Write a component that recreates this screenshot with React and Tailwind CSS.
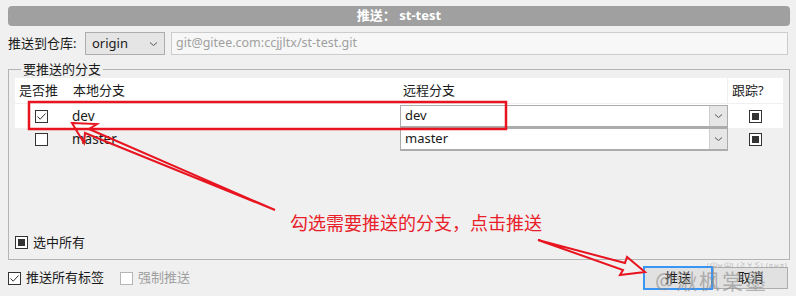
import React from "react";

const FONT = { fontFamily: '"Noto Sans","Noto Sans CJK SC",sans-serif' };

function Check({ state = "off", disabled = false }) {
  const border = disabled ? "border-[#b5b5b5]" : "border-[#333333]";
  return (
    <div className={`w-[13px] h-[13px] border ${border} bg-white flex items-center justify-center shrink-0`}>
      {state === "on" && (
        <svg width="11" height="11" viewBox="0 0 11 11">
          <polyline points="1.5,5.5 4.2,8.2 9.5,2.5" fill="none" stroke="#333" strokeWidth="1" />
        </svg>
      )}
      {state === "mixed" && <div className="w-[7px] h-[7px] bg-[#333333]" />}
    </div>
  );
}

function Chevron() {
  return (
    <svg width="9" height="6" viewBox="0 0 9 6">
      <polyline points="1,1.5 4.5,4.5 8,1.5" fill="none" stroke="#555" strokeWidth="1" />
    </svg>
  );
}

function Combo({ value }) {
  return (
    <div className="flex h-[23px] w-[328px] border border-[#acacac] border-b-2 bg-white">
      <div className="flex-1 flex items-center pl-[4px] text-[13px] text-[#1a1a1a]">{value}</div>
      <div className="w-[18px] border-l border-[#cfcfcf] bg-[#e6e6e6] flex items-center justify-center">
        <Chevron />
      </div>
    </div>
  );
}

export default function App() {
  return (
    <div style={FONT} className="relative w-[796px] h-[296px] bg-[#f0f0f0] px-[8px] pt-[6px] text-[13px] text-[#1a1a1a] overflow-hidden">
      {/* title */}
      <div className="h-[20px] w-[782px] rounded-[4px] bg-[#a0a0a0] flex items-center justify-center text-white font-bold text-[13px]">
        推送： st-test
      </div>

      {/* repo row */}
      <div className="mt-[6px] h-[23px] flex items-center">
        <div className="w-[77px]">推送到仓库:</div>
        <div className="w-[80px] h-[23px] border border-[#adadad] bg-[#e5e5e5] flex items-center justify-between pl-[6px] pr-[6px]">
          <span>origin</span>
          <Chevron />
        </div>
        <div className="ml-[6px] flex-1 h-[23px] border border-[#cccccc] bg-[#f7f7f7] flex items-center pl-[4px] text-[#a0a0a0] text-[12.5px]">
          git@gitee.com:ccjjltx/st-test.git
        </div>
      </div>

      {/* group */}
      <fieldset className="mt-[6px] w-[782px] border border-[#b4b4b4] px-[6px] pb-[7px] m-0">
        <legend className="ml-[6px] px-[2px] text-[13px] leading-[17px]">要推送的分支</legend>
        <div className="h-[174px] flex flex-col">
          {/* header */}
          <div className="flex h-[25px] bg-white items-center">
            <div className="w-[50px] pl-[4px]">是否推</div>
            <div className="w-[333px] pl-[8px]">本地分支</div>
            <div className="w-[329px] pl-[5px]">远程分支</div>
            <div className="flex-1 h-full border-l border-[#f0f0f0] flex items-center pl-[4px]">跟踪?</div>
          </div>
          <div className="h-[1px] bg-[#f0f0f0]" />
          {/* row 1 */}
          <div className="flex h-[24px] bg-white items-center">
            <div className="w-[50px] flex justify-center pl-[3px]"><Check state="on" /></div>
            <div className="w-[335px] pl-[7px] text-[13.5px]">dev</div>
            <Combo value="dev" />
            <div className="flex-1 flex justify-center"><Check state="mixed" /></div>
          </div>
          {/* row 2 */}
          <div className="flex h-[23px] items-center">
            <div className="w-[50px] flex justify-center pl-[3px]"><Check /></div>
            <div className="w-[335px] pl-[7px] text-[13.5px]">master</div>
            <Combo value="master" />
            <div className="flex-1 flex justify-center"><Check state="mixed" /></div>
          </div>
          <div className="flex-1" />
          <div className="flex items-center gap-[5px] pl-[-1px]">
            <Check state="mixed" />
            <span>选中所有</span>
          </div>
        </div>
      </fieldset>

      {/* bottom */}
      <div className="mt-[6px] flex items-center h-[24px]">
        <div className="flex items-center gap-[5px]">
          <Check state="on" />
          <span>推送所有标签</span>
        </div>
        <div className="ml-[16px] flex items-center gap-[5px] text-[#a0a0a0]">
          <Check disabled />
          <span>强制推送</span>
        </div>
        <div className="flex-1" />
        <div className="w-[70px] h-[24px] border-2 border-[#3a96f5] bg-[#e1e1e1] flex items-center justify-center">推送</div>
        <div className="w-[75px] h-[22px] border border-[#adadad] bg-[#e1e1e1] flex items-center justify-center">取消</div>
      </div>

      {/* watermark */}
      <div className="absolute left-[655px] top-[262px] text-[#8a8a8a] opacity-60 pointer-events-none">
        <div className="text-[6px] leading-[7px] pl-[52px] tracking-[1px]">(ↀωↀ) (≧∀≦) (ಥωಥ)</div>
        <div className="text-[21px] leading-[24px] tracking-[2px]">@湫枫棠墨</div>
      </div>

      {/* annotations */}
      <svg className="absolute left-0 top-0 pointer-events-none" width="796" height="296">
        <rect x="29" y="102" width="477" height="27" fill="none" stroke="#e8141f" strokeWidth="2.5" />
        <polygon points="72,123 97,124 89,129 275,210 85,133 84,143" fill="none" stroke="#e8141f" strokeWidth="2" strokeLinejoin="miter" />
        <polygon points="645,272 627,257 625,263 538,240 623,270 620,275" fill="none" stroke="#e8141f" strokeWidth="2" />
      </svg>
      <div className="absolute left-[290px] top-[211px] text-[18px] leading-[24px] text-[#e8202a]">
        勾选需要推送的分支，点击推送
      </div>
    </div>
  );
}
